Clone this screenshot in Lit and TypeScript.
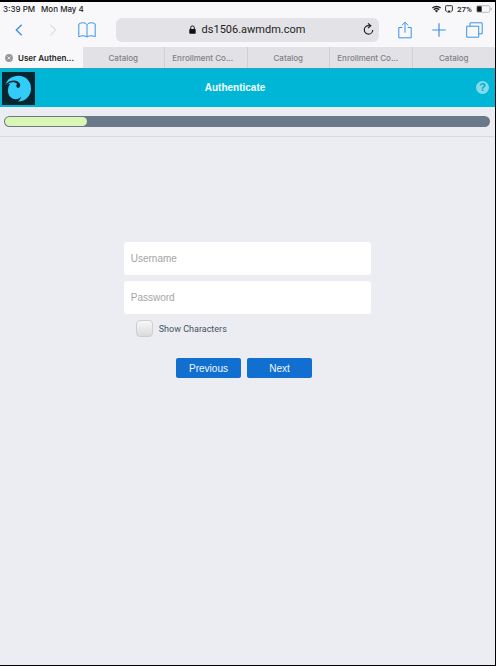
import { LitElement, html, css, svg } from "lit";
import { customElement, state } from "lit/decorators.js";

const wifi = html`<svg width="9" height="8" viewBox="0 0 9 8" aria-hidden="true">
  <path d="M.4 3.1A6 6 0 0 1 8.6 3.1M1.8 4.7a4 4 0 0 1 5.4 0" fill="none" stroke="#222" stroke-width="1.3"/>
  <path d="M4.5 7.4 2.9 5.8a2.3 2.3 0 0 1 3.2 0z" fill="#222"/></svg>`;

const airplay = html`<svg width="8" height="8" viewBox="0 0 8 8" aria-hidden="true">
  <path d="M2.2 6.2H1.3a.7.7 0 0 1-.7-.7V1.4a.7.7 0 0 1 .7-.7h5.4a.7.7 0 0 1 .7.7v4.1a.7.7 0 0 1-.7.7h-.9" fill="none" stroke="#333" stroke-width="1"/>
  <path d="M4 4.9 6 7.6H2z" fill="#222"/></svg>`;

const battery = html`<svg width="16" height="8" viewBox="0 0 16 8" aria-hidden="true">
  <rect x=".5" y=".7" width="13.4" height="6.6" rx="1.6" fill="none" stroke="#aaa" stroke-width=".8"/>
  <rect x="1.1" y="1.3" width="4.6" height="5.4" rx=".5" fill="#111"/>
  <path d="M15.2 2.9v2.2" stroke="#aaa" stroke-width=".9"/></svg>`;

const line = (w: number, h: number, d: string, width = 1) => html`<svg
  width=${w} height=${h} viewBox="0 0 ${w} ${h}" aria-hidden="true"
  fill="none" stroke="currentColor" stroke-width=${width}>${svg`<path d=${d}/>`}</svg>`;

const back = line(8, 12, "M6.7.8 1.3 6l5.4 5.2", 1.4);
const forward = line(8, 12, "M1.3.8 6.7 6l-5.4 5.2");
const book = line(18, 16, "M9 2.7C8 1.2 6.4.8 4.7.8 3.2.8 1.8 1.2.8 2v12.8c2.5-1.4 6.2-1.4 8.2.2 2-1.6 5.7-1.6 8.2-.2V2c-1-.8-2.4-1.2-3.9-1.2-1.7 0-3.3.4-4.3 1.9zV15");
const share = line(14, 18, "M4.2 6.5H.8v10.3h12.4V6.5H9.8M7 11.7V1.2M3.9 4.3 7 1.2l3.1 3.1");
const plus = line(14, 14, "M7 .3v13.4M.3 7h13.4", 1.2);
const pages = line(17, 16, "M.7 4.2h12v11H.7zM4 4.2V.8h12.2v11H12.7");

const lock = html`<svg width="7" height="9" viewBox="0 0 7 9" aria-hidden="true">
  <path d="M1.7 4.5V2.7a1.8 1.8 0 0 1 3.6 0v1.8" fill="none" stroke="#111" stroke-width="1"/>
  <rect x=".3" y="4" width="6.4" height="4.8" rx=".7" fill="#111"/></svg>`;

const reload = html`<svg width="11" height="13" viewBox="0 0 11 13" aria-hidden="true">
  <path d="M9.7 6.9a4.2 4.2 0 1 1-4.2-4.2h1.2" fill="none" stroke="#222" stroke-width="1.2"/>
  <path d="M5 .4 7.8 2.7 5 5.1" fill="none" stroke="#222" stroke-width="1.2"/></svg>`;

const closeTab = html`<svg width="8" height="8" viewBox="0 0 8 8" aria-hidden="true">
  <circle cx="4" cy="4" r="3.9" fill="#97979a"/>
  <path d="m2.5 2.5 3 3m0-3-3 3" stroke="#f4f4f6" stroke-width=".8"/></svg>`;

const logo = html`<svg class="logo" width="33" height="33" viewBox="0 0 33 33" role="img" aria-label="Company logo">
  <rect width="33" height="33" fill="#062630"/>
  <path d="M3.5 13C4.8 7.500 10 3.800 16.500 3.800 23.500 3.800 29 9 29 16.500c0 7-5 12.900-13 13.100 1.600-1.400 2.900-2.900 3.200-5-1.400 1.700-3.200 2.700-5.500 2.700C9.300 27.300 6 23.500 6 18.800c0-2.800.6-5 2-6.800-1.700-.2-3.100.2-4.500 1z" fill="#2fcdf8"/>
  <path d="M4 12.500C7.500 9.600 12 8.600 15.400 10.100" fill="none" stroke="#062630" stroke-width="1.300"/>
  <path d="M12.500 9.300c3.300-.3 5.800 1.700 5.700 4.100-.1 2-1.800 2.800-3.100 2-1.100-.7-1-2-.3-2.800.6-.9-.5-2-2.300-2.200z" fill="#062630"/>
</svg>`;

@customElement("app-root")
export class AppRoot extends LitElement {
  @state() private showCharacters = false;

  private tabs = ["User Authen...", "Catalog", "Enrollment Co...", "Catalog", "Enrollment Co...", "Catalog"];

  static styles = css`
    :host {
      display: flex;
      flex-direction: column;
      box-sizing: border-box;
      min-height: 100vh;
      border: solid #000;
      border-width: 2px 1px 1px 0;
      background: #ebedf3;
      color: #222;
      font-family: "Liberation Sans", Arial, sans-serif;
    }
    * { box-sizing: border-box; }
    svg { display: block; flex: none; }
    button {
      margin: 0;
      padding: 0;
      border: 0;
      background: none;
      color: inherit;
      font: inherit;
    }
    .chrome { background: #f8f8fa; }
    .status {
      display: flex;
      align-items: center;
      height: 14px;
      padding: 0 3px;
      font-size: 8px;
      font-weight: 500;
      font-family: Inter, sans-serif;
    }
    .status time + time { margin-left: 6px; }
    .indicators {
      display: flex;
      align-items: center;
      gap: 4px;
      margin-left: auto;
    }
    .indicators span { font-family: Roboto, sans-serif; }
    .toolbar {
      display: flex;
      align-items: center;
      height: 27px;
      padding: 0 12px 0 15px;
      color: #3b92e6;
    }
    .nav, .tools { display: flex; align-items: center; }
    .nav { gap: 26px; }
    .nav .bookmarks { margin-left: -5px; }
    .forward { color: #ccc; }
    .tools { gap: 20px; }
    .address {
      display: flex;
      flex: 1;
      align-items: center;
      height: 24px;
      margin: 0 19px 0 20px;
      padding: 0 5px 0 15px;
      border-radius: 6px;
      background: #e3e3e7;
      color: #222;
      font: 11px Roboto, sans-serif;
    }
    .url {
      display: flex;
      flex: 1;
      align-items: center;
      justify-content: center;
      gap: 6px;
    }
    .tabs {
      display: grid;
      grid-template-columns: repeat(6, 1fr);
      height: 21px;
      margin-top: 4px;
      font-family: Inter, sans-serif;
    }
    .tab {
      display: flex;
      align-items: center;
      justify-content: center;
      gap: 5px;
      border-right: 1px solid #cfcfd4;
      background: #e2e2e6;
      color: #808084;
      font-size: 8px;
      font-weight: 500;
      white-space: nowrap;
    }
    .tab.clipped { padding-right: 6px; }
    .tab:last-child { border: 0; }
    .tab.active {
      justify-content: flex-start;
      padding-left: 5px;
      border: 0;
      background: #f8f8fa;
      color: #222;
      font-weight: 600;
    }
    .banner {
      display: grid;
      grid-template-columns: 1fr auto 1fr;
      align-items: center;
      height: 39px;
      padding: 0 6px 0 2px;
      border-top: 1px solid #2ba3b8;
      background: #00b6d6;
      color: #f4fdff;
    }
    h1 { margin: 0; padding-right: 21px; font-size: 10px; line-height: 14px; }
    .help {
      justify-self: end;
      width: 13px;
      height: 13px;
      margin-bottom: 2px;
      border-radius: 50%;
      background: #83dcec;
      color: #00a9c9;
      font-size: 11px;
      font-weight: 700;
      line-height: 13px;
    }
    .progress {
      padding: 9px 5px 9px 4px;
      border-bottom: 1px solid #d8dae0;
    }
    .track {
      height: 11px;
      padding: 1px;
      border-radius: 6px;
      background: #6b7887;
    }
    .fill {
      height: 9px;
      border-radius: 5px;
      background: #d9f6b5;
    }
    form {
      display: flex;
      flex-direction: column;
      gap: 6px;
      width: 50%;
      margin: 105px auto 0;
    }
    .field {
      width: 100%;
      height: 33px;
      padding: 0 7px 1px;
      border: 0;
      border-radius: 3px;
      background: #fff;
      color: #333;
      font: 10px "Liberation Sans", Arial, sans-serif;
    }
    .field::placeholder { color: #a4a4a4; opacity: 1; }
    .check {
      display: flex;
      align-items: center;
      align-self: flex-start;
      gap: 6px;
      margin-left: 12px;
      color: #465260;
      font-size: 9px;
    }
    .check span { font-family: Roboto, sans-serif; }
    .check input {
      appearance: none;
      width: 17px;
      height: 17px;
      margin: 0;
      border: 1px solid #cfcfd2;
      border-radius: 4px;
      background: linear-gradient(#f8f8f8, #dadada);
    }
    .check input:checked { background: #1170cf; }
    .actions {
      display: flex;
      justify-content: center;
      gap: 6px;
      margin-top: 15px;
      padding-right: 7px;
    }
    .actions button {
      width: 65px;
      height: 20px;
      border-radius: 2px;
      background: #1170cf;
      color: #f0f7ff;
      font-size: 10px;
    }
  `;

  render() {
    return html`
      <div class="chrome">
        <div class="status">
          <time>3:39 PM</time><time>Mon May 4</time>
          <div class="indicators">${wifi}${airplay}<span>27%</span>${battery}</div>
        </div>
        <div class="toolbar">
          <div class="nav">
            <button aria-label="Back">${back}</button>
            <button class="forward" aria-label="Forward" disabled>${forward}</button>
            <button class="bookmarks" aria-label="Bookmarks">${book}</button>
          </div>
          <div class="address">
            <div class="url">${lock}<span>ds1506.awmdm.com</span></div>
            <button aria-label="Reload">${reload}</button>
          </div>
          <div class="tools">
            <button aria-label="Share">${share}</button>
            <button aria-label="New tab">${plus}</button>
            <button aria-label="Show tabs">${pages}</button>
          </div>
        </div>
        <nav class="tabs" aria-label="Tabs">
          ${this.tabs.map((name, i) => html`
            <button class="tab ${i === 0 ? "active" : name.endsWith("...") ? "clipped" : ""}">${i === 0 ? closeTab : ""}<span>${name}</span></button>`)}
        </nav>
      </div>
      <header class="banner">
        ${logo}
        <h1>Authenticate</h1>
        <button class="help" aria-label="Help">?</button>
      </header>
      <div class="progress">
        <div class="track" role="progressbar" aria-label="Enrollment" aria-valuenow="17">
          <div class="fill" style="width: 17%"></div>
        </div>
      </div>
      <form @submit=${(e: Event) => e.preventDefault()}>
        <input class="field" type="text" placeholder="Username" aria-label="Username">
        <input class="field" type=${this.showCharacters ? "text" : "password"} placeholder="Password" aria-label="Password">
        <label class="check">
          <input type="checkbox" .checked=${this.showCharacters}
            @change=${(e: Event) => { this.showCharacters = (e.target as HTMLInputElement).checked; }}>
          <span>Show Characters</span>
        </label>
        <div class="actions">
          <button type="button">Previous</button>
          <button type="submit">Next</button>
        </div>
      </form>
    `;
  }
}
